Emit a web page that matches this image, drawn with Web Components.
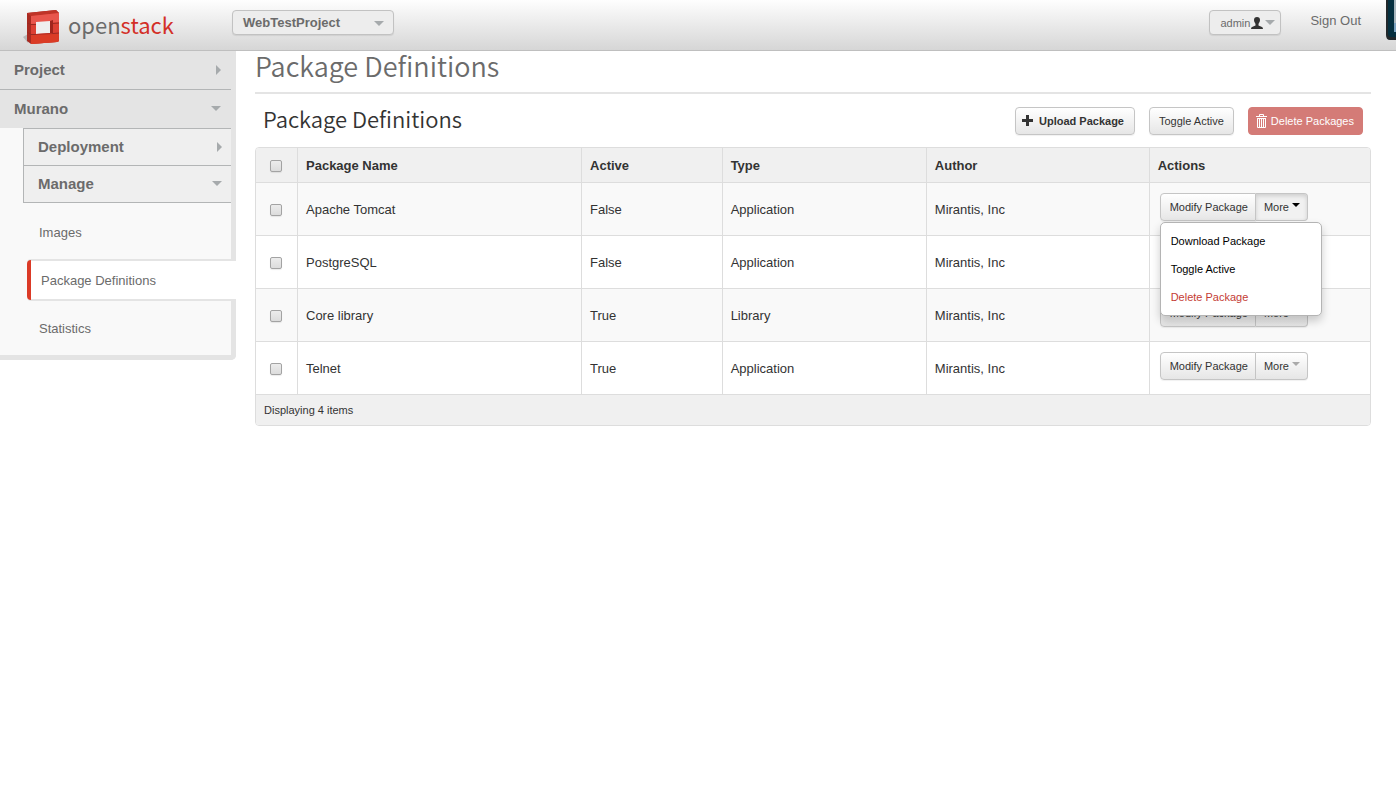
<!DOCTYPE html>
<html lang="en">
<head>
<meta charset="utf-8">
<title>Package Definitions</title>
<style>
  body { margin: 0; background: #fff; color: #333; font: 13px/18px "Liberation Sans", Arial, sans-serif; }
</style>
</head>
<body>
<dashboard-page>
  <top-bar slot="header" project="WebTestProject" user="admin"></top-bar>
  <side-nav slot="nav"></side-nav>
  <page-title>Package Definitions</page-title>
  <package-panel heading="Package Definitions"></package-panel>
</dashboard-page>

<script>
class BaseElement extends HTMLElement {
  connectedCallback() {
    if (this.shadowRoot) return;
    const t = document.createElement('template');
    t.innerHTML = this.render();
    this.attachShadow({ mode: 'open' }).append(t.content.cloneNode(true));
  }
}

customElements.define('dashboard-page', class extends BaseElement {
  render() { return `
    <style>
      :host { display: block; }
      .body { display: flex; align-items: flex-start; }
      main { flex: 1; min-width: 0; padding: 0 25px 0 19px; }
    </style>
    <slot name="header"></slot>
    <div class="body"><slot name="nav"></slot><main><slot></slot></main></div>`; }
});

customElements.define('brand-logo', class extends BaseElement {
  render() { return `
    <style>
      :host { display: block; }
      a { display: flex; align-items: flex-start; gap: 5px; color: #6b6b6b; text-decoration: none;
          font: 22px/32px "Noto Sans CJK SC", "Open Sans", sans-serif; }
      b { font-weight: 400; color: #d32f27; }
      svg { display: block; }
    </style>
    <a href="#" aria-label="openstack"><svg width="40" height="38" viewBox="0 0 40 38">
      <path d="M0 29L5 26V35Z" fill="#b9b9b9"/>
      <path d="M4 5L33 2L36 5V33L34 34L8 36L4 33Z" fill="#a92a21"/>
      <path d="M4 5L33 2L36 5L8 8Z" fill="#bf3428"/>
      <path d="M8 8L36 5V33L34 34L8 36Z" fill="#dc4033"/>
      <path d="M8 8L36 5V14L8 16Z" fill="#e8564c"/>
      <path d="M8 27L36 25V33L34 34L8 36Z" fill="#da3c26"/>
      <path d="M13 14L27 13V25L13 26Z" fill="#efefef"/>
      <path d="M27 13L30 12V26L27 25Z" fill="#9f251d"/>
      <path d="M13 26L27 25L30 26L13 27Z" fill="#b32e23"/>
      <path d="M4 15L8 16.500H13M4 24L8 26.500H13M30 15.500L36 15M30 25.500L36 25" stroke="#9a2a22" fill="none"/>
    </svg><span>open<b>stack</b></span></a>`; }
});

customElements.define('pill-menu', class extends BaseElement {
  render() { return `
    <style>
      :host { display: block; }
      button { display: flex; align-items: center; box-sizing: border-box; width: 100%; height: 25px; margin: 0;
        padding: 1px 9px 0 10px; border: 1px solid #c2c2c2; border-radius: 4px; background: #ededed;
        box-shadow: 0 1px 1px rgba(0,0,0,.08); color: #6b6b6b; font: inherit; }
      i { margin-left: auto; border: 5px solid transparent; border-top-color: #a6aaac; border-bottom: 0; }
      :host([compact]) button { padding: 0 5px 0 10px; }
    </style>
    <button type="button" aria-haspopup="true"><slot></slot><i></i></button>`; }
});

customElements.define('top-bar', class extends BaseElement {
  render() { return `
    <style>
      :host { display: block; }
      header { position: relative; display: flex; align-items: flex-start; box-sizing: border-box; height: 51px;
        padding: 8px 35px 0 23px; border-bottom: 1px solid #bfbfbf;
        background: linear-gradient(#fefefe, #d6d6d6); }
      brand-logo { width: 209px; }
      pill-menu { margin-top: 2px; }
      .project { width: 162px; font-weight: 700; }
      .user { width: 72px; margin-left: auto; font-size: 11px; }
      .user svg { flex: none; margin-left: 1px; }
      .out { margin: 4px 0 0 29px; color: #6b6b6b; text-decoration: none; }
      .peek { position: absolute; top: 0; right: 0; }
    </style>
    <header>
      <brand-logo></brand-logo>
      <pill-menu class="project">${this.getAttribute('project')}</pill-menu>
      <pill-menu class="user" compact>${this.getAttribute('user')}<svg width="12" height="12" viewBox="0 0 12 12"><path fill="#333" d="M6 0C8 0 9 1 9 3C9 5 8 5.500 7.500 7V8.500L11 10Q12 10.500 12 12H0Q0 10.500 1 10L4.500 8.500V7C4 5.500 3 5 3 3C3 1 4 0 6 0Z"/></svg></pill-menu>
      <a class="out" href="#">Sign Out</a>
      <svg class="peek" width="10" height="40" viewBox="0 0 10 40">
        <path d="M0 0H10V40H4Q0 40 0 35Z" fill="#22282b"/><path d="M2 0H8V32H10V37H5Q2 37 2 33Z" fill="#06303f"/>
        <path d="M8 0H10V32H8Z" fill="#a8b6bd"/><path d="M8 23H10V32H8Z" fill="#7ba2bf"/>
      </svg>
    </header>`; }
});

customElements.define('nav-group', class extends BaseElement {
  render() {
    const open = this.hasAttribute('open');
    return `
    <style>
      :host { display: block; }
      button { display: flex; align-items: center; box-sizing: border-box; width: 100%; height: 38px; margin: 0;
        padding: 0 10px 1px 14px; border: 0; background: #e4e4e4; color: #6b6b6b;
        font-family: inherit; font-size: 15px; font-weight: 700; line-height: 17px; }
      :host([sub]) button { height: 36px; padding-right: 9px; background: #efefef; }
      i { margin-left: auto; border: 5px solid transparent; }
      .down { border-top-color: #a6aaac; border-bottom: 0; }
      .right { border-left-color: #a6aaac; border-right: 0; }
    </style>
    <button type="button" aria-expanded="${open}"><slot></slot><i class="${open ? 'down' : 'right'}"></i></button>`; }
});

customElements.define('nav-link', class extends BaseElement {
  render() { return `
    <style>
      :host { display: block; }
      a { display: flex; align-items: center; box-sizing: border-box; height: 42px; padding: 2px 0 0 12px;
        color: #6b6b6b; text-decoration: none; }
      :host([current]) { margin-right: -5px; }
      :host([current]) a { position: relative; padding-left: 14px; background: #fff;
        border: solid #e4e4e4; border-width: 2px 0; border-radius: 4px 0 0 4px; }
      :host([current]) a::before { content: ""; position: absolute; left: 0; top: -1px; bottom: -1px; width: 4px;
        border-radius: 4px 0 0 4px; background: #db3a26; }
    </style>
    <a href="#"><slot></slot></a>`; }
});

customElements.define('side-nav', class extends BaseElement {
  render() { return `
    <style>
      :host { display: block; flex: none; box-sizing: border-box; width: 236px; background: #f9f9f9;
        border: solid #e4e4e4; border-width: 0 5px 5px 0; border-radius: 0 0 5px 0; }
      .top + .top { border-top: 1px solid #b3b5b6; }
      .panels { margin-left: 23px; border-left: 1px solid #b3b5b6; border-bottom: 1px solid #b3b5b6; }
      .panels nav-group { border-top: 1px solid #b3b5b6; }
      .links { display: grid; gap: 6px; padding: 8px 0 6px 27px; }
    </style>
    <nav>
      <nav-group class="top">Project</nav-group>
      <nav-group class="top" open>Murano</nav-group>
      <div class="panels"><nav-group sub>Deployment</nav-group><nav-group sub open>Manage</nav-group></div>
      <div class="links"><nav-link>Images</nav-link><nav-link current>Package Definitions</nav-link><nav-link>Statistics</nav-link></div>
    </nav>`; }
});

customElements.define('page-title', class extends BaseElement {
  render() { return `
    <style>
      :host { display: block; border-bottom: 2px solid #e4e4e4; }
      h1 { margin: 0; padding-bottom: 11px; color: #6b6b6b; font: 350 27px/30px "Noto Sans CJK SC", Lato, sans-serif; }
    </style>
    <h1><slot></slot></h1>`; }
});

customElements.define('ui-button', class extends BaseElement {
  render() { return `
    <style>
      :host { display: block; }
      button { display: flex; align-items: center; gap: 3px; box-sizing: border-box; height: 28px; margin: 0;
        padding: 0 9px; border: 1px solid #c5c5c5; border-radius: 4px; white-space: nowrap;
        background: linear-gradient(#fff, #e6e6e6); box-shadow: 0 1px 1px rgba(0,0,0,.06);
        color: #333; font: inherit; font-size: 11px; }
      :host([strong]) button { gap: 5px; padding: 0 10px 0 6px; font-weight: 700; }
      :host([danger]) button { padding: 0 8px 0 7px; background: #d47b77; border-color: #d47b77; color: #fff; box-shadow: none; }
      :host([join="left"]) button { padding-right: 7px; border-radius: 4px 0 0 4px; }
      :host([join="right"]) button { padding: 0 7px 0 8px; border-left: 0; border-radius: 0 4px 4px 0; }
      :host([pressed]) button { background: #f1f1f1; box-shadow: inset 0 2px 4px rgba(0,0,0,.15); }
    </style>
    <button type="button"><slot></slot></button>`; }
});

customElements.define('row-actions', class extends BaseElement {
  render() {
    const open = this.hasAttribute('open');
    return `
    <style>
      :host { display: flex; position: relative; }
      i { align-self: flex-start; margin-top: 3px; border: 4px solid transparent; border-top-color: #aaa; border-bottom: 0; }
      :host([open]) i { border-top-color: #000; }
      ul { position: absolute; z-index: 2; top: 29px; left: 0; box-sizing: border-box; width: 162px; margin: 0; padding: 4px 0;
        list-style: none; background: #fff; border: 1px solid #b4b4b4; border-radius: 5px; box-shadow: 0 5px 10px rgba(0,0,0,.2); }
      ul a { display: block; padding: 0 10px; color: #000; font-size: 11px; line-height: 28px; text-decoration: none; }
      ul .danger { color: #c43c35; }
      .caret { display: flex; gap: 3px; line-height: 14px; }
    </style>
    <ui-button join="left">Modify Package</ui-button>
    <ui-button join="right" ${open ? 'pressed' : ''}><span class="caret">More<i></i></span></ui-button>
    ${open ? `<ul><li><a href="#">Download Package</a></li><li><a href="#">Toggle Active</a></li><li><a class="danger" href="#">Delete Package</a></li></ul>` : ''}`; }
});

customElements.define('package-table', class extends BaseElement {
  render() {
    const rows = [
      ['Apache Tomcat', 'False', 'Application', 'Mirantis, Inc'],
      ['PostgreSQL', 'False', 'Application', 'Mirantis, Inc'],
      ['Core library', 'True', 'Library', 'Mirantis, Inc'],
      ['Telnet', 'True', 'Application', 'Mirantis, Inc'],
    ];
    return `
    <style>
      :host { display: block; }
      table { table-layout: fixed; width: 100%; border: 1px solid #ddd; border-radius: 4px; border-spacing: 0; }
      th, td { box-sizing: border-box; padding: 2px 8px 0; border-left: 1px solid #ddd; text-align: left; }
      th:first-child, td:first-child { border-left: 0; }
      th { height: 34px; background: #f0f0f0; }
      thead th:first-child { border-top-left-radius: 3px; }
      thead th:last-child { border-top-right-radius: 3px; }
      td { height: 53px; border-top: 1px solid #ddd; }
      td:last-child { padding-left: 10px; }
      tbody tr:nth-child(odd) td { background: #f9f9f9; }
      tfoot td { height: 32px; background: #f0f0f0; font-size: 11px; border-radius: 0 0 3px 3px; }
      tfoot td:last-child { height: 31px; padding: 0 8px; }
      th.pick, td.pick { padding: 2px 0 0 14px; }
      .c1 { width: 41px; } .c2 { width: 25.500%; } .c3 { width: 12.620%; } .c4 { width: 18.330%; } .c5 { width: 20%; }
      input { appearance: none; display: block; box-sizing: border-box; width: 12px; height: 12px; margin: 0;
        border: 1px solid #a3a3a3; border-radius: 2px; background: linear-gradient(#ececec, #dcdcdc); box-shadow: 0 1px 1px rgba(0,0,0,.08); }
      row-actions { margin-bottom: 6px; }
    </style>
    <table>
      <colgroup><col class="c1"><col class="c2"><col class="c3"><col class="c4"><col class="c5"><col></colgroup>
      <thead><tr><th class="pick"><input type="checkbox" aria-label="Select all"></th><th>Package Name</th><th>Active</th><th>Type</th><th>Author</th><th>Actions</th></tr></thead>
      <tbody>${rows.map((r, i) => `<tr><td class="pick"><input type="checkbox" aria-label="Select ${r[0]}"></td>${r.map(c => `<td>${c}</td>`).join('')}<td><row-actions ${i ? '' : 'open'}></row-actions></td></tr>`).join('')}</tbody>
      <tfoot><tr><td colspan="6">Displaying 4 items</td></tr></tfoot>
    </table>`; }
});

customElements.define('package-panel', class extends BaseElement {
  render() { return `
    <style>
      :host { display: block; }
      .head { display: flex; align-items: center; gap: 14px; height: 53px; padding: 0 8px; }
      h2 { margin: 0 auto 0 0; padding-bottom: 5px; color: #333; font: 350 22px/28px "Noto Sans CJK SC", Lato, sans-serif; }
      svg { display: block; }
    </style>
    <div class="head">
      <h2>${this.getAttribute('heading')}</h2>
      <ui-button strong><svg width="12" height="12" viewBox="0 0 12 12"><path d="M4 0H7V4H11V7H7V11H4V7H0V4H4Z" fill="#333"/></svg>Upload Package</ui-button>
      <ui-button>Toggle Active</ui-button>
      <ui-button danger><svg width="12" height="14" viewBox="0 0 12 14" fill="none" stroke="#fff"><path d="M0 2.500H11M3.500 2V.5H7.500V2M1.500 4V13.500H9.500V4M1 4.500H10M3.500 5V13M5.500 5V13M7.500 5V13"/></svg>Delete Packages</ui-button>
    </div>
    <package-table></package-table>`; }
});
</script>
</body>
</html>
